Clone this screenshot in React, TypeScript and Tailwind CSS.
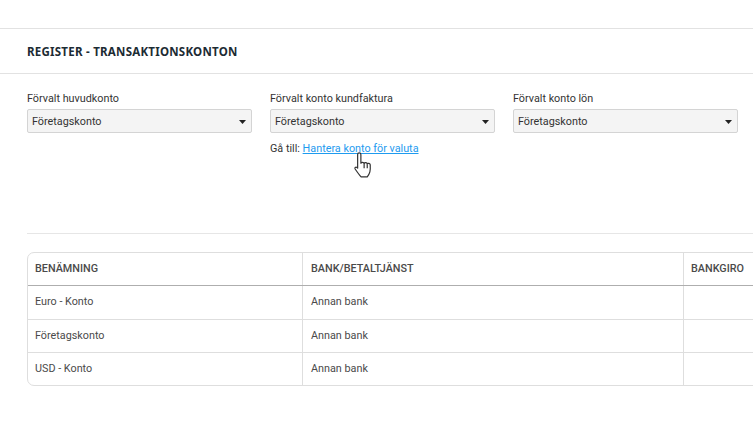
export default function App() {
  const selects = [
    { label: "Förvalt huvudkonto" },
    { label: "Förvalt konto kundfaktura", link: true },
    { label: "Förvalt konto lön" },
  ];
  const rows = [
    { name: "Euro - Konto", h: "h-[34px]", cell: "pb-[1px]", line: "border-[#aeaeae]" },
    { name: "Företagskonto", h: "h-[33px]", cell: "", line: "border-[#dedede]" },
    { name: "USD - Konto", h: "h-[33px]", cell: "", line: "border-[#dedede]" },
  ];
  return (
    <div className="w-[753px] h-[430px] overflow-hidden bg-white pt-[28px] text-[10.8px] leading-[16px] text-[#333] font-['Roboto',sans-serif]">
      <div className="border-y border-[#e2e2e2] h-[46px] pl-[27px] pt-[1px] flex items-center">
        <h1 className="text-[11.5px] font-bold tracking-[0.25px] text-[#1c2b33] font-['Noto_Sans',sans-serif]">REGISTER - TRANSAKTIONSKONTON</h1>
      </div>
      <div className="flex gap-[18px] pl-[27px] pt-[17px] h-[159px]">
        {selects.map((s) => (
          <div key={s.label} className="w-[225px] shrink-0">
            <div className="h-[16px] text-[#333]">{s.label}</div>
            <div className="mt-[2px] h-[24px] rounded-[2px] border border-[#d4d4d4] bg-[#f4f4f4] pl-[4px] pr-[5px] pt-[1px] flex items-center justify-between">
              <span>Företagskonto</span>
              <svg width="7" height="4" viewBox="0 0 7 4" className="block"><path d="M0 0h7L3.500 4z" fill="#222" /></svg>
            </div>
            {s.link && (
              <div className="relative mt-[8px]">
                Gå till: <a className="text-[#1e9bef] underline" href="#">Hantera konto för valuta</a>
                <svg width="24" height="29" viewBox="0 0 20 24" className="absolute left-[82px] top-[10px]">
                  <path d="M6 1.500c.9 0 1.400.6 1.400 1.400v7.200c.3-1 2.500-1 2.700.2.4-1 2.400-.9 2.600.4.5-.9 2.400-.7 2.500.8.1 2 .2 4-.3 5.800-.5 1.800-1.300 3-2.200 4.200H7.600c-1.400-1.500-3-3.700-5-6.600-.6-1 .4-2 1.500-1.300l.6.6V2.900c0-.8.5-1.400 1.300-1.400z" fill="#fff" stroke="#333" strokeWidth="1" strokeLinejoin="round" />
                  <path d="M10.100 10.300v4M12.700 10.900v3.400" stroke="#333" strokeWidth="1" fill="none" />
                </svg>
              </div>
            )}
          </div>
        ))}
      </div>
      <div className="ml-[27px] border-t border-[#e6e6e6] pt-[18px]">
        <div className="w-[800px] border border-[#dedede] rounded-[7px] overflow-hidden">
          <div className="flex h-[32px] font-medium text-[#4a4a4a]">
            <div className="w-[275px] shrink-0 pl-[7px] flex items-center border-r border-[#dedede]">BENÄMNING</div>
            <div className="w-[381px] shrink-0 pl-[8px] flex items-center border-r border-[#dedede]">BANK/BETALTJÄNST</div>
            <div className="flex-1 pl-[7px] flex items-center">BANKGIRO</div>
          </div>
          {rows.map((r) => (
            <div key={r.name} className={`flex ${r.h} text-[#4a4a4a] border-t ${r.line}`}>
              <div className={`w-[275px] shrink-0 pl-[7px] flex items-center border-r border-[#dedede] ${r.cell}`}>{r.name}</div>
              <div className={`w-[381px] shrink-0 pl-[8px] flex items-center border-r border-[#dedede] ${r.cell}`}>Annan bank</div>
              <div className="flex-1" />
            </div>
          ))}
        </div>
      </div>
    </div>
  );
}
